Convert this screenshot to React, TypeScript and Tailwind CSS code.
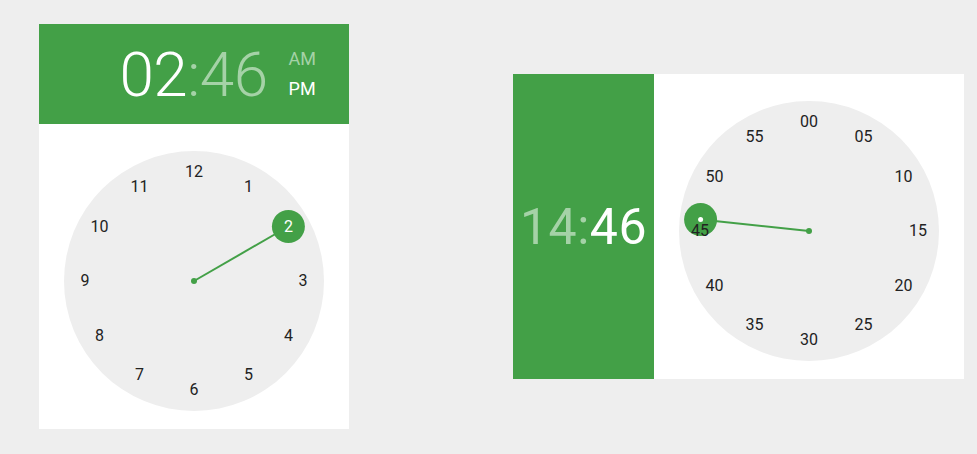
import React from 'react';

const GREEN = '#43a047';

interface DialProps {
  labels: string[];
  angle: number;
  selectedIndex: number | null;
  showDot?: boolean;
}

const Dial = ({ labels, angle, selectedIndex, showDot }: DialProps) => {
  const c = 130;
  const r = 109;
  const rad = (angle * Math.PI) / 180;
  const sx = c + r * Math.sin(rad);
  const sy = c - r * Math.cos(rad);

  return (
    <div className="relative w-[260px] h-[260px]">
      <svg width={260} height={260} className="absolute inset-0">
        <circle cx={c} cy={c} r={130} fill="#eeeeee" />
        <line x1={c} y1={c} x2={sx} y2={sy} stroke={GREEN} strokeWidth={2} />
        <circle cx={c} cy={c} r={3} fill={GREEN} />
        <circle cx={sx} cy={sy} r={16.5} fill={GREEN} />
        {showDot && <circle cx={sx} cy={sy} r={2.5} fill="#ffffff" />}
      </svg>
      {labels.map((label, i) => {
        const a = (i * 30 * Math.PI) / 180;
        const x = c + r * Math.sin(a);
        const y = c - r * Math.cos(a);
        return (
          <div
            key={i}
            className={`absolute -translate-x-1/2 -translate-y-1/2 text-[16px] leading-none ${
              i === selectedIndex ? 'text-white' : 'text-[#222222]'
            }`}
            style={{ left: x, top: y }}
          >
            {label}
          </div>
        );
      })}
    </div>
  );
};

const hours = ['12', '1', '2', '3', '4', '5', '6', '7', '8', '9', '10', '11'];
const minutes = ['00', '05', '10', '15', '20', '25', '30', '35', '40', '45', '50', '55'];

export default function App() {
  return (
    <div className="w-[977px] h-[454px] bg-[#eeeeee] flex items-start pl-[39px] gap-[164px] font-['Roboto',sans-serif]">
      {/* 12h portrait picker */}
      <div className="mt-[24px] w-[310px] bg-white flex flex-col">
        <div className="h-[100px] bg-[#43a047] flex items-center justify-end pr-[33px]">
          <div className="text-[62px] font-light leading-none tracking-[-0.5px] pt-[2px]">
            <span className="text-white">02</span>
            <span className="text-[#a5d2a7]">:46</span>
          </div>
          <div className="ml-[21px] flex flex-col gap-[12px] text-[18px] leading-none">
            <span className="text-[#a5d2a7]">AM</span>
            <span className="text-white">PM</span>
          </div>
        </div>
        <div className="flex justify-center pt-[27px] pb-[18px]">
          <Dial labels={hours} angle={60} selectedIndex={2} />
        </div>
      </div>

      {/* 24h landscape picker */}
      <div className="mt-[74px] w-[451px] bg-white flex">
        <div className="w-[141px] bg-[#43a047] flex items-center justify-center">
          <div className="text-[50px] leading-none tracking-[0.5px]">
            <span className="text-[#a5d2a7]">14:</span>
            <span className="text-white">46</span>
          </div>
        </div>
        <div className="flex-1 flex justify-center pt-[27px] pb-[18px]">
          <Dial labels={minutes} angle={276} selectedIndex={null} showDot />
        </div>
      </div>
    </div>
  );
}
